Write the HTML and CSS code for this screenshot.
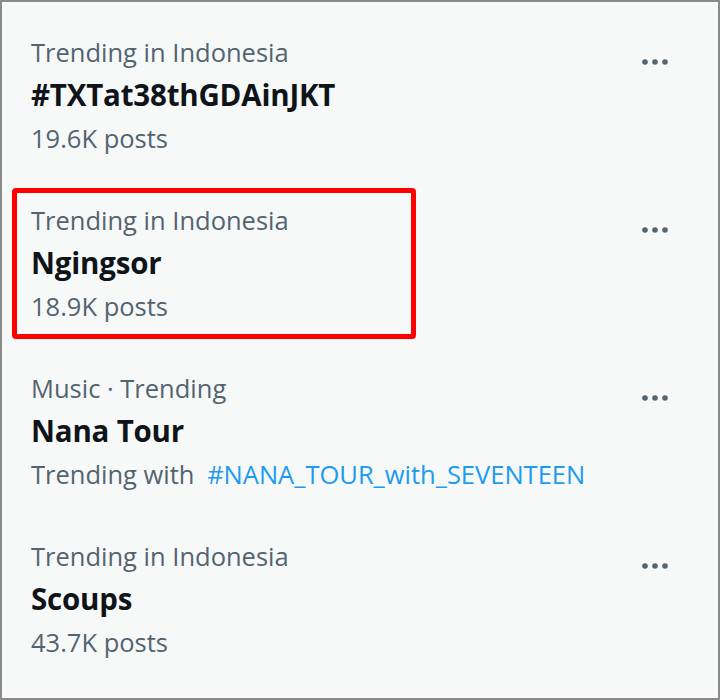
FILE: index.html
```html
<!DOCTYPE html>
<html lang="en">
<head>
    <meta charset="UTF-8">
    <meta name="viewport" content="width=device-width, initial-scale=1.0">
    <title>Trends</title>
    <link rel="stylesheet" href="styles.css">
</head>
<body>
    <div id="trends">
        <!-- Trend 1 -->
        <div class="trend">
            <div class="trend-text">
                <div class="trend-meta">Trending in Indonesia</div>
                <div class="trend-title">#TXTat38thGDAinJKT</div>
                <div class="trend-meta posts">19.6K posts</div>
            </div>
            <svg class="more" width="30" height="10" viewBox="0 0 30 10"><circle cx="5" cy="5" r="2.8"/><circle cx="15" cy="5" r="2.8"/><circle cx="25" cy="5" r="2.8"/></svg>
        </div>

        <!-- Trend 2 (highlighted) -->
        <div class="trend">
            <div class="trend-text highlight">
                <div class="trend-meta">Trending in Indonesia</div>
                <div class="trend-title">Ngingsor</div>
                <div class="trend-meta posts">18.9K posts</div>
            </div>
            <svg class="more" width="30" height="10" viewBox="0 0 30 10"><circle cx="5" cy="5" r="2.8"/><circle cx="15" cy="5" r="2.8"/><circle cx="25" cy="5" r="2.8"/></svg>
        </div>

        <!-- Trend 3 -->
        <div class="trend">
            <div class="trend-text">
                <div class="trend-meta">Music · Trending</div>
                <div class="trend-title">Nana Tour</div>
                <div class="trend-meta posts">Trending with <a class="tag" href="#">#NANA_TOUR_with_SEVENTEEN</a></div>
            </div>
            <svg class="more" width="30" height="10" viewBox="0 0 30 10"><circle cx="5" cy="5" r="2.8"/><circle cx="15" cy="5" r="2.8"/><circle cx="25" cy="5" r="2.8"/></svg>
        </div>

        <!-- Trend 4 -->
        <div class="trend">
            <div class="trend-text">
                <div class="trend-meta">Trending in Indonesia</div>
                <div class="trend-title">Scoups</div>
                <div class="trend-meta posts">43.7K posts</div>
            </div>
            <svg class="more" width="30" height="10" viewBox="0 0 30 10"><circle cx="5" cy="5" r="2.8"/><circle cx="15" cy="5" r="2.8"/><circle cx="25" cy="5" r="2.8"/></svg>
        </div>
    </div>
</body>
</html>
```

FILE: styles.css
```css
/* Trends panel */
body {
    margin: 0;
    padding: 0;
    background: #fff;
    font-family: "Open Sans", "Noto Sans", sans-serif;
}
#trends {
    width: 720px;
    height: 700px;
    box-sizing: border-box;
    border: 2px solid #8a8a8a;
    background: #f7f9f9;
    display: flex;
    flex-direction: column;
}
.trend {
    height: 168px;
    box-sizing: border-box;
    padding: 29px 48px 0 29px;
    display: flex;
    justify-content: space-between;
    align-items: flex-start;
}
.trend-text {
    display: flex;
    flex-direction: column;
}
.trend-meta {
    font-size: 25.5px;
    line-height: 43px;
    color: #536471;
}
.trend-title {
    font-size: 29.5px;
    line-height: 42px;
    font-weight: 700;
    color: #0f1419;
    letter-spacing: -0.2px;
}
.posts {
    line-height: 44px;
}
.tag {
    color: #1d9bf0;
    text-decoration: none;
    margin-left: 6px;
}
.more {
    margin-top: 26px;
    fill: #536471;
}
/* red annotation box */
.highlight {
    position: relative;
}
.highlight::after {
    content: "";
    position: absolute;
    left: -19px;
    top: -11px;
    width: 404px;
    height: 151px;
    box-sizing: border-box;
    border: 5px solid #f00;
    border-radius: 4px;
}
```
